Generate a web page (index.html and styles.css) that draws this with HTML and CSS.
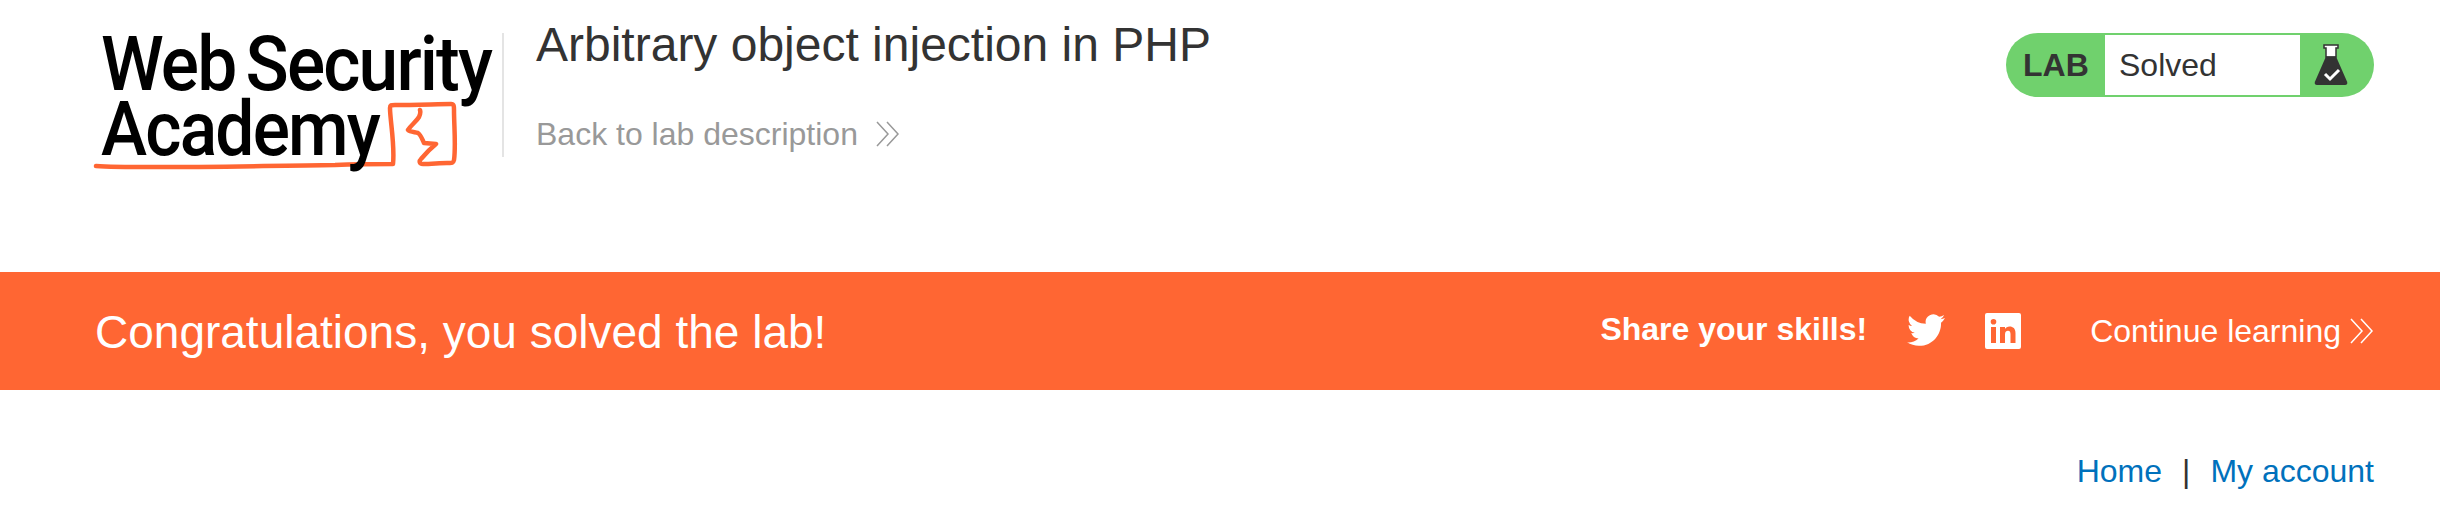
FILE: index.html
```html
<!DOCTYPE html>
<html lang="en">
<head>
<meta charset="utf-8">
<title>Arbitrary object injection in PHP</title>
<link rel="stylesheet" href="styles.css">
</head>
<body>
<header class="top">
  <svg class="logo" width="407" height="150" viewBox="0 0 407 150" role="img" aria-label="Web Security Academy">
    <path class="logo-line" d="M1 141C40 144 150 141 240 140C265 139 285 139 298 139C300 120 295 95 295 83C295 80 296 80 300 80C320 80 345 79 356 79C359 79 359 81 359 85C359 100 361 122 359 135C358 139 356 138 352 138C345 138 336 139 328 139C324 139 324 136 326 134C331 128 336 123 341 119L329 118C327 114 326 110 323 108C319 107 315 107 313 105C316 100 321 97 324 92C325 90 326 88 325 85"/>
    <text class="logo-text" x="6" y="65" textLength="390" lengthAdjust="spacingAndGlyphs">Web Security</text>
    <text class="logo-text" x="6" y="130" textLength="278" lengthAdjust="spacingAndGlyphs">Academy</text>
  </svg>
  <div class="heading">
    <h1 class="title">Arbitrary object injection in PHP</h1>
    <a class="back" href="#">Back to lab description
      <svg class="chev" width="24" height="26" viewBox="0 0 24 26"><path d="M1 1l11 12L1 25M11 1l11 12-11 12"/></svg>
    </a>
  </div>
  <div class="status">
    <span class="status-label">LAB</span>
    <span class="status-value">Solved</span>
    <span class="status-icon">
      <svg width="34" height="42" viewBox="0 0 34 42"><path class="flask-cap" d="M10 1h14v3h-2v9h-10V4h-2z"/><path class="flask-body" d="M12 12.500h10l11 25c.8 2 0 3.500-2 3.500H3c-2 0-2.800-1.500-2-3.500z"/><path class="flask-check" d="M11 30l5 5 9-9"/></svg>
    </span>
  </div>
</header>
<section class="banner">
  <h2 class="congrats">Congratulations, you solved the lab!</h2>
  <div class="actions">
    <strong class="share">Share your skills!</strong>
    <svg class="social tw" width="38" height="32" viewBox="0 0 24 20"><path d="M24 2.400a9.800 9.800 0 0 1-2.800.8 4.900 4.900 0 0 0 2.200-2.700 9.800 9.800 0 0 1-3.100 1.200A4.900 4.900 0 0 0 11.900 6.100 14 14 0 0 1 1.700 1 4.900 4.900 0 0 0 3.200 7.500a4.900 4.900 0 0 1-2.200-.6v.1a4.900 4.900 0 0 0 3.900 4.800 4.900 4.900 0 0 1-2.200.1 4.900 4.900 0 0 0 4.600 3.400A9.900 9.900 0 0 1 0 17.800 14 14 0 0 0 7.500 20c9.100 0 14-7.500 14-14v-.6A10 10 0 0 0 24 2.400z"/></svg>
    <svg class="social in" width="36" height="36" viewBox="0 0 36 36"><path fill-rule="evenodd" d="M2 0h32a2 2 0 0 1 2 2v32a2 2 0 0 1-2 2H2a2 2 0 0 1-2-2V2a2 2 0 0 1 2-2zM6 14v16h5V14zm2.500-8a2.800 2.800 0 1 0 0 5.600 2.800 2.800 0 0 0 0-5.600zM15 14v16h5v-8.500c0-2.500 1-3.700 3-3.700s2.500 1.500 2.500 3.700V30h5v-9.800c0-4.500-2.500-6.600-5.800-6.600-2.300 0-3.900 1-4.700 2.400V14z"/></svg>
    <a class="continue" href="#">Continue learning
      <svg class="chev" width="24" height="26" viewBox="0 0 24 26"><path d="M1 1l11 12L1 25M11 1l11 12-11 12"/></svg>
    </a>
  </div>
</section>
<nav class="links">
  <a href="#">Home</a><span class="pipe">|</span><a href="#">My account</a>
</nav>
</body>
</html>
```
FILE: styles.css
```css
* { box-sizing: border-box; }
html, body { margin: 0; padding: 0; }
body {
  width: 2440px;
  height: 512px;
  overflow: hidden;
  background: #fff;
  color: #333;
  font-family: "Liberation Sans", Arial, sans-serif;
}
a { text-decoration: none; }
.top {
  display: flex;
  align-items: flex-start;
  height: 272px;
  padding: 0 66px 0 95px;
}
.logo { flex: none; margin-top: 25px; overflow: visible; }
.logo-text {
  font-family: Roboto, sans-serif;
  font-size: 76px;
  font-weight: 500;
  letter-spacing: -2px;
  word-spacing: -6px;
  fill: #000;
}
.logo-line {
  fill: none;
  stroke: #ff6633;
  stroke-width: 4.500px;
  stroke-linecap: round;
  stroke-linejoin: round;
}
.heading {
  flex: 1;
  height: 124px;
  margin-top: 33px;
  padding-left: 32px;
  border-left: 2px solid #e4e4e4;
}
.title {
  margin: -16px 0 0;
  font-size: 48px;
  line-height: 56px;
  font-weight: 400;
}
.back {
  display: flex;
  align-items: center;
  gap: 18px;
  margin-top: 42px;
  color: #999;
  font-size: 32px;
  line-height: 38px;
}
.chev { flex: none; }
.chev path { fill: none; stroke: currentColor; stroke-width: 1.500px; }
.status {
  display: flex;
  align-items: stretch;
  width: 368px;
  height: 64px;
  margin-top: 33px;
  padding: 2px 0;
  border-radius: 32px;
  background: #70d16d;
}
.status-label {
  display: flex;
  align-items: center;
  width: 99px;
  padding-left: 17px;
  font-size: 32px;
  font-weight: 700;
}
.status-value {
  display: flex;
  align-items: center;
  width: 195px;
  padding-left: 14px;
  background: #fff;
  font-size: 32px;
}
.status-icon {
  display: flex;
  flex: 1;
  align-items: center;
  padding-left: 14px;
}
.flask-cap { fill: #fff; stroke: #333; stroke-width: 1.500px; }
.flask-body { fill: #333; }
.flask-check { fill: none; stroke: #fff; stroke-width: 3px; }
.banner {
  display: flex;
  align-items: center;
  justify-content: space-between;
  height: 118px;
  padding: 0 66px 0 95px;
  background: #ff6633;
  color: #fff;
}
.congrats {
  margin: 2px 0 0;
  font-size: 46px;
  font-weight: 400;
}
.actions { display: flex; align-items: center; }
.share { font-size: 32px; margin-right: 40px; margin-top: -4px; }
.social { fill: #fff; flex: none; }
.tw { margin-right: 40px; margin-top: -2px; }
.in { margin-right: 69px; }
.continue {
  display: flex;
  align-items: center;
  gap: 9px;
  color: #fff;
  font-size: 32px;
}
.links {
  display: flex;
  justify-content: flex-end;
  align-items: center;
  margin-top: 62px;
  padding-right: 66px;
  font-size: 32px;
  line-height: 38px;
}
.links a { color: #0071bc; }
.pipe { margin: 0 20px; }
```
